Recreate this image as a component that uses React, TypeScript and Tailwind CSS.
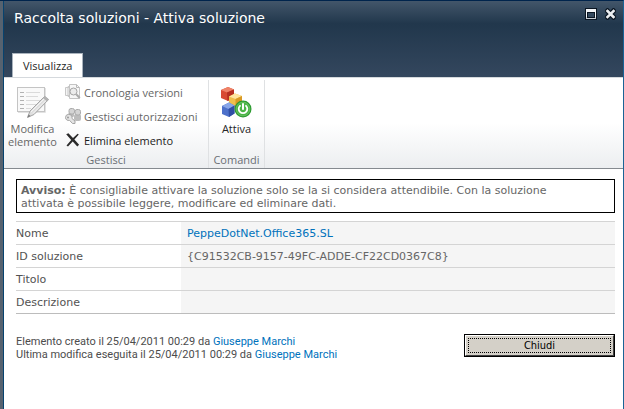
import type { ReactNode } from "react";

const rows = [
	{ label: "Nome", value: "PeppeDotNet.Office365.SL", href: "#solution" },
	{ label: "ID soluzione", value: "{C91532CB-9157-49FC-ADDE-CF22CD0367C8}" },
	{ label: "Titolo", value: "" },
	{ label: "Descrizione", value: "" },
];

function MaximizeIcon() {
	return (
		<svg width="12" height="12" viewBox="0 0 12 12" shapeRendering="crispEdges">
			<rect width="12" height="12" fill="#0b1622" />
			<rect x="1" y="1" width="10" height="10" fill="#f3f5f7" />
			<rect x="1" y="9" width="10" height="2" fill="#c9cfd6" />
			<rect x="2" y="4" width="8" height="6" fill="#0b1622" />
			<rect x="3" y="5" width="6" height="4" fill="#34495e" />
		</svg>
	);
}

function CloseIcon() {
	return (
		<svg width="11" height="12" viewBox="0 0 11 12">
			<path d="M2.5 3 8.5 9M8.5 3 2.5 9" stroke="#0b1622" strokeWidth="5" strokeLinecap="square" />
			<path d="M2.5 3 8.5 9M8.5 3 2.5 9" stroke="#eceff2" strokeWidth="2.6" strokeLinecap="square" />
		</svg>
	);
}

function EditIcon() {
	return (
		<svg width="32" height="32" viewBox="0 0 32 32" fill="none">
			<rect x="0.5" y="1.5" width="27" height="24" fill="#f9f9f9" stroke="#c4c4c4" />
			<path d="M1 26.5h27.5V2" stroke="#e2e2e2" />
			<path d="M3 6.5h4M3 10.5h4M3 14.5h4M3 18.5h4M3 22.5h4" stroke="#b2b2b2" />
			<path d="M9 6.5h14M9 10.5h12M9 14.5h14M9 18.5h10M9 22.5h5" stroke="#dadada" />
			<path d="M10.5 31.5 13 25 27.5 10.5 31.5 13.5 17 28.5Z" fill="#dedede" stroke="#a4a4a4" />
			<path d="M14 26 28 12M16 27.5 30 13.5" stroke="#f5f5f5" />
			<path d="m26 12 4 3.5 2-2-4-3.5Z" fill="#b2b2b2" />
			<path d="m10.5 31.5 1.2-3 1.8 1.5Z" fill="#777" />
		</svg>
	);
}

function VersionsIcon() {
	return (
		<svg width="16" height="16" viewBox="0 0 16 16" fill="none">
			<path d="M.5 3.5h4v8h-4zM3 2.5h4v10H3z" fill="#f4f4f4" stroke="#c8c8c8" />
			<path d="M4.5.5h7l3 3v11h-10z" fill="#f7f7f7" stroke="#c4c4c4" />
			<path d="M11.5.5v3h3" stroke="#b8b8b8" />
			<circle cx="8.5" cy="7.5" r="3.5" fill="#ececec" stroke="#a5a5a5" />
			<path d="m11.2 10.2 3.6 3.8" stroke="#ababab" strokeWidth="2" />
		</svg>
	);
}

function PermissionsIcon() {
	return (
		<svg width="16" height="16" viewBox="0 0 16 16">
			<rect x="9" y="6" width="7" height="7" rx="2" fill="#bcbcbc" />
			<rect x="3" y="5" width="6" height="4" rx="1.5" fill="#bcbcbc" />
			<rect x="4" y=".5" width="5.5" height="5.5" rx="2" fill="#d4d4d4" stroke="#aaa" />
			<rect x="10" y="1.5" width="5.5" height="5.5" rx="2" fill="#d4d4d4" stroke="#aaa" />
			<path d="M7 8.8a3.3 3.3 0 0 0-6.5.8c0 2 2 3.3 4 2.7L7.5 15.5H10V13L7 10.5Z" fill="#e4e4e4" stroke="#a5a5a5" />
			<circle cx="3" cy="9.5" r="1" fill="#999" />
		</svg>
	);
}

function DeleteIcon() {
	return (
		<svg width="16" height="16" viewBox="0 0 16 16" fill="#2b2b2b">
			<path d="M1.2 2.2 3.4 1.2 8 6.1 12.6 1.8l1.2.8L9.4 7.5l4.7 5.2-1.8 1.8L7.7 9.5 3 14.5l-1.5-1L6.2 8Z" />
		</svg>
	);
}

function ActivateIcon() {
	return (
		<svg width="32" height="32" viewBox="1 0 32 32" fill="none">
			<path d="m1 4 7-3 6 2.5v8L8 15l-7-3Z" fill="#d84a32" />
			<path d="m1 4 7-3 6 2.5L7 6.5Z" fill="#ef8368" />
			<path d="M7 6.5 14 3.5v8L7.5 15Z" fill="#b52f20" />
			<path d="m9 10.5 6-3 7 2.5v8l-6.5 3L9 18.5Z" fill="#f0bf4c" />
			<path d="m9 10.5 6-3 7 2.5-6.5 3Z" fill="#ffe6a0" />
			<path d="m15.5 13 6.5-3v8l-6.5 3Z" fill="#d99a25" />
			<path d="m2 20 7-3.5 5.5 3v8L9 31l-7-3Z" fill="#4d70ca" />
			<path d="m2 20 7-3.5 5.5 3L8.5 23Z" fill="#89a6e8" />
			<path d="m8.5 23 6-3.5v8L9 31Z" fill="#304ea5" />
			<circle cx="23" cy="23" r="8.5" fill="#2b9a2f" />
			<circle cx="23" cy="23" r="6.9" fill="#4bb546" stroke="#8fd284" strokeWidth=".5" />
			<path d="M20 19.8a4.3 4.3 0 1 0 6 0" stroke="#fff" strokeWidth="1.8" strokeLinecap="round" />
			<path d="M23 18v5" stroke="#fff" strokeWidth="2" strokeLinecap="round" />
		</svg>
	);
}

function SmallCommand({ icon, children, disabled }: { icon: ReactNode; children: ReactNode; disabled?: boolean }) {
	return (
		<button
			type="button"
			disabled={disabled}
			className="flex h-6 items-center gap-[3px] whitespace-nowrap text-[#1b1b1b] disabled:text-[#666]"
		>
			{icon}
			{children}
		</button>
	);
}

export default function App() {
	return (
		<div className="flex min-h-screen flex-col border-t border-r border-t-[#00244c] border-r-[#1a6496] bg-white font-['DejaVu_Sans',Verdana,sans-serif] text-[11px] leading-[13px]">
			<div className="flex grow">
				<div className="w-[3px] shrink-0 bg-[#56626f]" />
				<div className="min-w-0 grow border-l border-[#07436f]">
					<header className="flex flex-col bg-linear-to-b from-[#43566a] via-[#21374c] via-30% to-[#34475e]">
						<div className="flex items-start justify-between pt-1.5 pr-[7px] pl-[10px]">
							<h1 className="pt-px text-[14px] leading-5 text-white">
								Raccolta soluzioni - Attiva soluzione
							</h1>
							<div className="flex gap-2 pt-px">
								<button type="button" aria-label="Ingrandisci"><MaximizeIcon /></button>
								<button type="button" aria-label="Chiudi finestra"><CloseIcon /></button>
							</div>
						</div>
						<nav className="flex px-2 pt-[25px]">
							<button
								type="button"
								className="h-6 border border-b-0 border-[#a9b3bd] bg-white px-[10px] font-['Open_Sans',sans-serif] text-[11px] text-[#262626]"
							>
								Visualizza
							</button>
						</nav>
					</header>

					<section className="flex border-t border-b border-t-[#d5d9dd] border-b-[#858a8f] bg-linear-to-b from-white via-white to-[#eceef0] font-['Open_Sans',sans-serif] text-[11px]">
						<div className="mt-0.5 flex w-[205px] flex-col border-r border-[#dfe1e3]">
							<div className="flex gap-1">
								<button type="button" disabled className="flex w-[57px] flex-col items-center pt-1.5 text-[#666]">
									<EditIcon />
									<span className="pt-1">Modifica elemento</span>
								</button>
								<div className="flex flex-col">
									<SmallCommand icon={<VersionsIcon />} disabled>Cronologia versioni</SmallCommand>
									<SmallCommand icon={<PermissionsIcon />} disabled>Gestisci autorizzazioni</SmallCommand>
									<SmallCommand icon={<DeleteIcon />}>Elimina elemento</SmallCommand>
								</div>
							</div>
							<div className="pt-px pb-0.5 text-center text-[#6a6f75]">Gestisci</div>
						</div>
						<div className="mt-0.5 flex w-14 flex-col justify-between border-r border-[#dfe1e3]">
							<button type="button" className="flex flex-col items-center pt-1.5 text-[#262626]">
								<ActivateIcon />
								<span className="pt-1">Attiva</span>
							</button>
							<div className="pb-0.5 text-center text-[#6a6f75]">Comandi</div>
						</div>
					</section>

					<main className="pt-[10px] pr-2 pb-4 pl-3 text-[#666]">
						<p className="border border-black pt-1 pr-8 pb-0.5 pl-1">
							<strong>Avviso:</strong> È consigliabile attivare la soluzione solo se la si considera attendibile. Con la soluzione attivata è possibile leggere, modificare ed eliminare dati.
						</p>

						<table className="mt-2 w-full border-collapse border-b border-[#bcbcbc]">
							<tbody>
								{rows.map((row) => (
									<tr key={row.label} className="h-[23px] border-t border-[#d4d4d4]">
										<th scope="row" className="w-[165px] text-left font-normal text-[#525252]">{row.label}</th>
										<td className="bg-[#f5f5f5] px-1.5">
											{row.href ? <a href={row.href} className="text-[#0072bc]">{row.value}</a> : row.value}
										</td>
									</tr>
								))}
							</tbody>
						</table>

						<footer className="mt-5 flex items-start justify-between text-[#4c4c4c]">
							<div className="pt-px font-[Roboto,sans-serif]">
								<p>Elemento creato il 25/04/2011 00:29 da <a href="#author" className="text-[#0072bc]">Giuseppe Marchi</a></p>
								<p>Ultima modifica eseguita il 25/04/2011 00:29 da <a href="#editor" className="text-[#0072bc]">Giuseppe Marchi</a></p>
							</div>
							<button type="button" className="w-[151px] border border-black bg-[#d4d0c8] font-['DejaVu_Sans_Condensed','DejaVu_Sans',sans-serif] text-black">
								<span className="block border border-t-white border-r-[#404040] border-b-[#404040] border-l-white p-0.5">
									<span className="block border border-dotted border-black leading-[13px]">Chiudi</span>
								</span>
							</button>
						</footer>
					</main>
				</div>
			</div>
		</div>
	);
}
